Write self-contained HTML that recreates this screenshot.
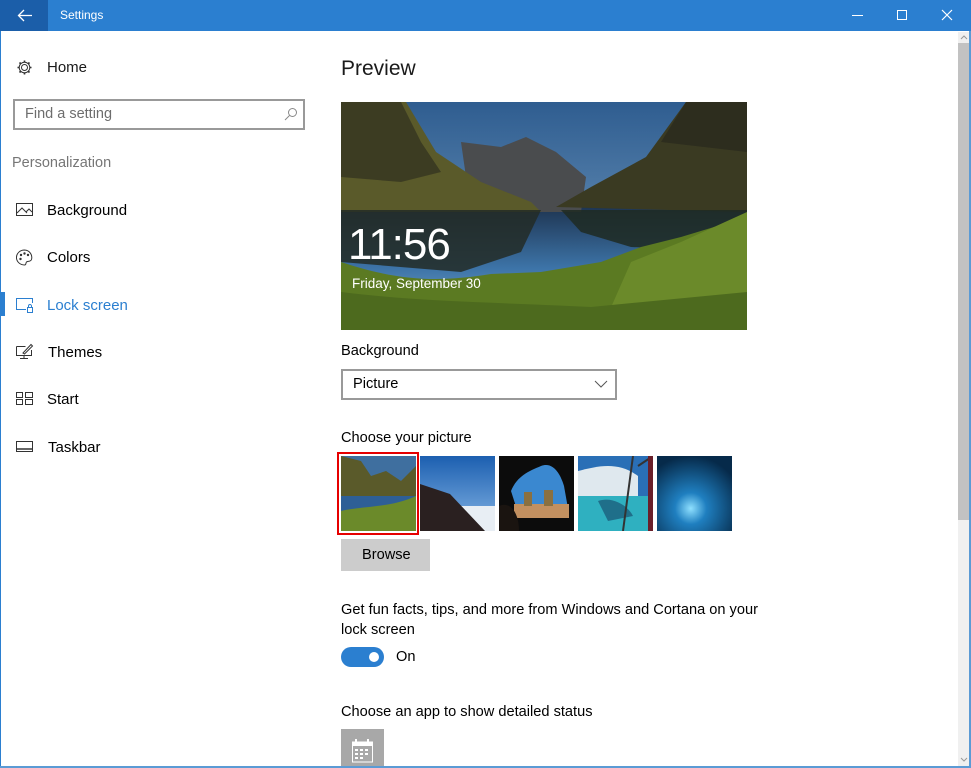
<!DOCTYPE html>
<html><head><meta charset="utf-8"><style>
*{margin:0;padding:0;box-sizing:border-box}
body{width:971px;height:768px;overflow:hidden;background:#fff;font-family:"Liberation Sans",sans-serif;position:relative;color:#000}
.abs{position:absolute}
.title{left:0;top:0;width:971px;height:31px;background:#2b7fd0}
.back{left:0;top:0;width:48px;height:31px;background:#1b5ea9}
.nav{font-size:14.5px;color:#1a1a1a}
.txt{font-size:14.6px}
</style></head><body>
<div class="abs title"></div>
<div class="abs back"></div>
<svg class="abs" style="left:17px;top:9px" width="16" height="13" viewBox="0 0 16 13"><path d="M7 1L1.5 6.5L7 12M1.5 6.5H15" stroke="#fff" stroke-width="1.3" fill="none"/></svg>
<div class="abs" style="left:60px;top:8px;color:#fff;font-size:12px">Settings</div>
<div class="abs" style="left:852px;top:15px;width:11px;height:1px;background:#fff"></div>
<div class="abs" style="left:897px;top:10px;width:10px;height:10px;border:1px solid #fff"></div>
<svg class="abs" style="left:941px;top:9px" width="12" height="12"><path d="M1 1L11 11M11 1L1 11" stroke="#fff" stroke-width="1.2"/></svg>
<div class="abs" style="left:0;top:31px;width:1px;height:737px;background:#2b7fd0"></div>
<div class="abs" style="left:969px;top:31px;width:2px;height:737px;background:#5b9bd5"></div>
<div class="abs" style="left:0;top:766px;width:971px;height:2px;background:#5b9bd5"></div>
<div class="abs" style="left:958px;top:32px;width:11px;height:734px;background:#f0f0f0"></div>
<div class="abs" style="left:958px;top:43px;width:11px;height:477px;background:#c2c2c2"></div>
<svg class="abs" style="left:960px;top:35px" width="8" height="5"><path d="M1 4L4 1L7 4" stroke="#999" fill="none"/></svg>
<svg class="abs" style="left:960px;top:757px" width="8" height="5"><path d="M1 1L4 4L7 1" stroke="#999" fill="none"/></svg>

<svg class="abs" style="left:16px;top:59px" width="17" height="17" viewBox="0 0 17 17"><circle cx="8.5" cy="8.5" r="3" stroke="#333" fill="none"/><path d="M8.5 1.5v2M8.5 13.5v2M1.5 8.5h2M13.5 8.5h2M3.5 3.5l1.5 1.5M12 12l1.5 1.5M3.5 13.5L5 12M12 5l1.5-1.5" stroke="#333" stroke-width="1.6"/><circle cx="8.5" cy="8.5" r="5.3" stroke="#333" fill="none"/></svg>
<div class="abs nav" style="left:47px;top:59px;font-size:15px">Home</div>
<div class="abs" style="left:13px;top:99px;width:292px;height:31px;border:2px solid #999"></div>
<div class="abs" style="left:25px;top:106px;font-size:14.5px;color:#6d6d6d">Find a setting</div>
<svg class="abs" style="left:284px;top:107px" width="14" height="14"><circle cx="8.5" cy="5.5" r="4" stroke="#888" fill="none"/><path d="M5.5 8.5L1 13" stroke="#888"/></svg>
<div class="abs" style="left:12px;top:155px;font-size:14.5px;color:#767676">Personalization</div>

<svg class="abs" style="left:16px;top:203px" width="17" height="14"><rect x="0.5" y="0.5" width="16" height="12" stroke="#333" fill="none"/><path d="M1 10L6 5L11 10M10 9l3-3 3 3" stroke="#333" fill="none"/></svg>
<div class="abs txt" style="left:47px;top:202px;font-size:15px">Background</div>
<svg class="abs" style="left:16px;top:249px" width="17" height="17"><path d="M8.5 1a7.5 7 0 1 0 0 15c2 0 1-2 2-3s4 0 5-2.5A7.5 7.5 0 0 0 8.5 1z" stroke="#333" fill="none"/><circle cx="5" cy="6" r="1.2" fill="#333"/><circle cx="8.5" cy="4.5" r="1.2" fill="#333"/><circle cx="12" cy="6" r="1.2" fill="#333"/><circle cx="4.5" cy="10" r="1.2" fill="#333"/></svg>
<div class="abs txt" style="left:47px;top:249px;font-size:15px">Colors</div>
<div class="abs" style="left:1px;top:292px;width:4px;height:24px;background:#2b7fd0"></div>
<svg class="abs" style="left:16px;top:298px" width="18" height="16"><path d="M10 11.5H0.5V0.5H16.5V5" stroke="#2b7fd0" fill="none"/><rect x="11.5" y="9.5" width="5" height="5" stroke="#2b7fd0" fill="none"/><path d="M12.5 9.5V8a1.5 1.5 0 0 1 3 0v1.5" stroke="#2b7fd0" fill="none"/></svg>
<div class="abs txt" style="left:47px;top:297px;color:#2b7fd0;font-size:15px">Lock screen</div>
<svg class="abs" style="left:16px;top:343px" width="18" height="16"><path d="M0.5 3.5h9M0.5 3.5v9h15V7M8 12.5v3M4 15.5h8" stroke="#333" fill="none"/><path d="M7 10l8-8.5 1.5 1.5-8 8z" stroke="#333" fill="none"/></svg>
<div class="abs txt" style="left:48px;top:344px;font-size:15px">Themes</div>
<svg class="abs" style="left:16px;top:392px" width="17" height="14"><rect x="0.5" y="0.5" width="6" height="5" stroke="#333" fill="none"/><rect x="9.5" y="0.5" width="7" height="5" stroke="#333" fill="none"/><rect x="0.5" y="7.5" width="6" height="5" stroke="#333" fill="none"/><rect x="9.5" y="7.5" width="7" height="5" stroke="#333" fill="none"/></svg>
<div class="abs txt" style="left:47px;top:391px;font-size:15px">Start</div>
<svg class="abs" style="left:16px;top:441px" width="17" height="12"><rect x="0.5" y="0.5" width="16" height="10" stroke="#333" fill="none"/><path d="M1 8h15" stroke="#333" stroke-width="1.5"/></svg>
<div class="abs txt" style="left:48px;top:439px;font-size:15px">Taskbar</div>

<div class="abs" style="left:341px;top:57px;font-size:21px;color:#1a1a1a">Preview</div>
<svg class="abs" style="left:341px;top:102px" width="406" height="228" viewBox="0 0 406 228">
<defs><linearGradient id="sky" x1="0" y1="0" x2="0" y2="1"><stop offset="0" stop-color="#2f5d90"/><stop offset="1" stop-color="#7ea6c8"/></linearGradient>
<linearGradient id="wat" x1="0" y1="0" x2="0" y2="1"><stop offset="0" stop-color="#1e3552"/><stop offset="0.5" stop-color="#3d74a8"/><stop offset="1" stop-color="#8ab2d0"/></linearGradient></defs>
<rect width="406" height="228" fill="url(#sky)"/>
<rect y="105" width="406" height="123" fill="url(#wat)"/>
<path d="M120 40L160 45L185 35L215 50L245 75L240 110L130 110Z" fill="#4a4c4e"/>
<path d="M0 0H65L95 50L140 80L190 100L200 110L0 110Z" fill="#5a5a2a"/>
<path d="M0 0H60L80 40L100 70L60 80L0 75Z" fill="#3c3c22"/>
<path d="M406 0H345L305 55L250 85L215 105L406 110Z" fill="#3a3a22"/>
<path d="M406 0H345L320 40L406 50Z" fill="#2d2d1e"/>
<path d="M0 108H200L180 150L120 170L0 160Z" fill="#232c26" opacity="0.85"/>
<path d="M406 108H220L240 130L290 145L406 150Z" fill="#1f2a22" opacity="0.85"/>
<path d="M0 160C60 180 100 180 150 172L200 170L260 160L300 145L340 135L406 115V228H0Z" fill="#5b7a22"/>
<path d="M290 160L340 140L406 110V228H260Z" fill="#6b8a2a"/>
<path d="M0 190C80 200 150 200 250 205L406 190V228H0Z" fill="#4d6a1e"/>
<text x="7" y="157" font-family="Liberation Sans" font-size="44" fill="#fff" letter-spacing="-1">11:56</text>
<text x="11" y="186" font-family="Liberation Sans" font-size="13.5" fill="#fff">Friday, September 30</text>
</svg>
<div class="abs txt" style="left:341px;top:343px">Background</div>
<div class="abs" style="left:341px;top:369px;width:276px;height:31px;border:2px solid #999"></div>
<div class="abs txt" style="left:353px;top:376px">Picture</div>
<svg class="abs" style="left:594px;top:380px" width="14" height="8"><path d="M1 1L7 7L13 1" stroke="#555" fill="none"/></svg>
<div class="abs txt" style="left:341px;top:430px">Choose your picture</div>
<div class="abs" style="left:337px;top:452px;width:82px;height:83px;border:2px solid #e60000"></div>
<svg class="abs" style="left:341px;top:456px" width="75" height="75" viewBox="0 0 75 75"><rect width="75" height="75" fill="#3f6f9f"/><path d="M0 0L20 5L30 20L45 15L60 25L75 10V40H0Z" fill="#5a5a2a"/><path d="M0 40H75V55H0Z" fill="#2e5f96"/><path d="M0 55C20 50 50 52 75 40V75H0Z" fill="#6b8a2a"/></svg>
<svg class="abs" style="left:420px;top:456px" width="75" height="75" viewBox="0 0 75 75"><defs><linearGradient id="b2" x1="0" y1="0" x2="0" y2="1"><stop offset="0" stop-color="#1c5fb0"/><stop offset="1" stop-color="#86b6e6"/></linearGradient></defs><rect width="75" height="75" fill="url(#b2)"/><path d="M30 50H75V75H60Z" fill="#e8eef4"/><path d="M0 28L30 38L65 75H0Z" fill="#2a2020"/></svg>
<svg class="abs" style="left:499px;top:456px" width="75" height="75" viewBox="0 0 75 75"><rect width="75" height="75" fill="#0c0c0c"/><path d="M12 35C18 20 30 15 42 10C55 5 62 20 65 30L70 58L20 60Z" fill="#3a88d0"/><path d="M15 48H70V62H15Z" fill="#c29060"/><rect x="25" y="36" width="8" height="14" fill="#8a7040"/><rect x="45" y="34" width="9" height="16" fill="#8a7040"/><path d="M0 75V50C10 45 20 55 20 75Z" fill="#1a1410"/></svg>
<svg class="abs" style="left:578px;top:456px" width="75" height="75" viewBox="0 0 75 75"><rect width="75" height="75" fill="#2a6fb6"/><path d="M0 15C20 10 40 5 60 20V40H0Z" fill="#dfe8ee"/><path d="M0 40H75V75H0Z" fill="#2fb0c0"/><path d="M20 45C35 40 50 50 55 60L30 65Z" fill="#1f6f8a"/><path d="M55 0L45 75M60 10L75 0" stroke="#333" stroke-width="2"/><rect x="70" y="0" width="5" height="75" fill="#6a1f2a"/></svg>
<svg class="abs" style="left:657px;top:456px" width="75" height="75" viewBox="0 0 75 75"><defs><radialGradient id="ice" cx="0.45" cy="0.7" r="0.7"><stop offset="0" stop-color="#8fe0ff"/><stop offset="0.3" stop-color="#1f7fc0"/><stop offset="1" stop-color="#062a4a"/></radialGradient></defs><rect width="75" height="75" fill="url(#ice)"/></svg>
<div class="abs" style="left:341px;top:539px;width:89px;height:32px;background:#cccccc"></div>
<div class="abs txt" style="left:362px;top:547px">Browse</div>
<div class="abs txt" style="left:341px;top:600px;line-height:20px;width:432px">Get fun facts, tips, and more from Windows and Cortana on your lock screen</div>
<div class="abs" style="left:341px;top:647px;width:43px;height:20px;border-radius:10px;background:#2b7fd0"></div>
<div class="abs" style="left:369px;top:652px;width:10px;height:10px;border-radius:5px;background:#fff"></div>
<div class="abs txt" style="left:396px;top:649px">On</div>
<div class="abs txt" style="left:341px;top:704px">Choose an app to show detailed status</div>
<div class="abs" style="left:341px;top:729px;width:43px;height:37px;background:#a8a8a8"></div>
<svg class="abs" style="left:352px;top:739px" width="21" height="24"><rect x="0.5" y="3" width="20" height="20" fill="none" stroke="#fff"/><rect x="0.5" y="3" width="20" height="4" fill="#fff"/><path d="M4 0v5M16 0v5" stroke="#fff" stroke-width="2"/><g fill="#fff"><rect x="3" y="10" width="3" height="2"/><rect x="8" y="10" width="3" height="2"/><rect x="13" y="10" width="3" height="2"/><rect x="3" y="14" width="3" height="2"/><rect x="8" y="14" width="3" height="2"/><rect x="13" y="14" width="3" height="2"/><rect x="3" y="18" width="3" height="2"/><rect x="8" y="18" width="3" height="2"/></g></svg>
</body></html>
